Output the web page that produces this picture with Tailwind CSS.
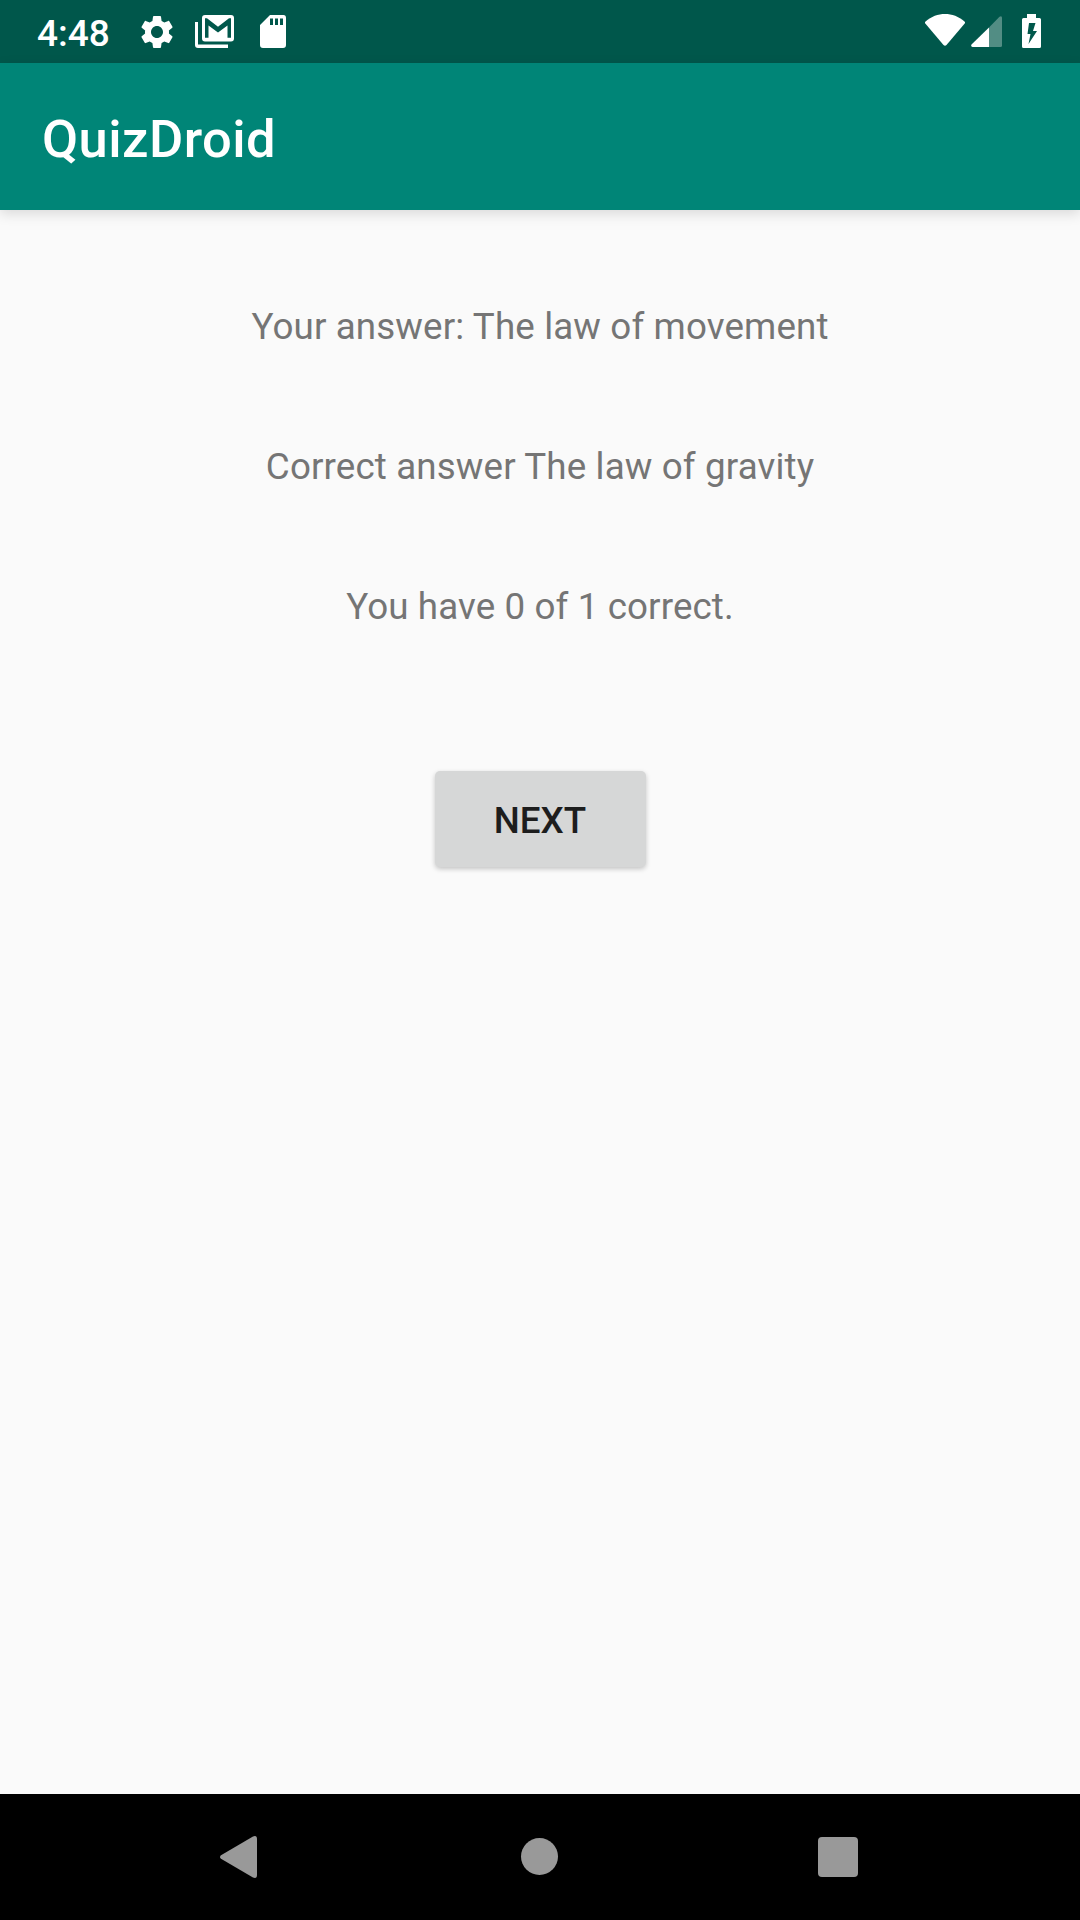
<!DOCTYPE html>
<html lang="en">
<head>
<meta charset="utf-8">
<title>QuizDroid</title>
<script src="https://cdn.jsdelivr.net/npm/@tailwindcss/browser@4"></script>
</head>
<body class="flex h-[1920px] w-[1080px] flex-col overflow-hidden bg-[#fafafa] font-['Roboto',sans-serif]">
  <!-- Status bar -->
  <header class="flex h-[63px] shrink-0 items-start bg-[#00574b] text-white">
    <span class="ml-[37px] mt-[12px] w-[100px] text-[37px] leading-[44px] font-medium">4:48</span>
    <svg class="mt-[12px] h-[40px] w-[40px]" viewBox="0 0 24 24" fill="currentColor"><path d="M19.14 12.94c.04-.3.06-.61.06-.94 0-.32-.02-.64-.07-.94l2.03-1.58c.18-.14.23-.41.12-.61l-1.92-3.32c-.12-.22-.37-.29-.59-.22l-2.39.96c-.5-.38-1.03-.7-1.62-.94l-.36-2.54c-.04-.24-.24-.41-.48-.41h-3.84c-.24 0-.43.17-.47.41l-.36 2.54c-.59.24-1.13.57-1.62.94l-2.39-.96c-.22-.08-.47 0-.59.22L2.74 8.87c-.12.21-.08.47.12.61l2.03 1.58c-.05.3-.09.63-.09.94s.02.64.07.94l-2.03 1.58c-.18.14-.23.41-.12.61l1.92 3.32c.12.22.37.29.59.22l2.39-.96c.5.38 1.03.7 1.62.94l.36 2.54c.05.24.24.41.48.41h3.84c.24 0 .44-.17.47-.41l.36-2.54c.59-.24 1.13-.56 1.62-.94l2.39.96c.22.08.47 0 .59-.22l1.92-3.32c.12-.22.07-.47-.12-.61l-2.01-1.58zM12 15.6c-1.98 0-3.6-1.62-3.6-3.6s1.62-3.6 3.6-3.6 3.6 1.62 3.6 3.6-1.62 3.6-3.6 3.6z"/></svg>
    <svg class="ml-[18px] mt-[15px] h-[33px] w-[39px]" viewBox="0 0 39 33" fill="currentColor"><path fill-rule="evenodd" d="M10 0H36Q39 0 39 3V23.500Q39 26.500 36 26.500H10Q7 26.500 7 23.500V3Q7 0 10 0ZM10 3.200V22.700H13.500V10.500L23 17.500L32.500 10.500V22.700H36V3.200H34L23 11.700L12 3.200Z"/><path d="M0 7H3V29.500H33V33H3Q0 33 0 30Z"/></svg>
    <svg class="ml-[26px] mt-[15px] h-[33px] w-[26px]" viewBox="0 0 26 33" fill="currentColor"><path fill-rule="evenodd" d="M10 0H23.500Q26 0 26 3V30Q26 33 23 33H3Q0 33 0 30V10ZM10 3.500V10H13V3.500ZM15 3.500V10H18V3.500ZM20 3.500V10H23V3.500Z"/></svg>
    <svg class="ml-auto mt-[14px] h-[32px] w-[40px]" viewBox="0 0 40 32" fill="currentColor"><path d="M.5 7.500C12-2.400 28-2.400 39.500 7.500Q40.500 8.500 39.700 9.500L21.500 31Q20 32.500 18.500 31L.3 9.500Q-.5 8.500 .5 7.500Z"/></svg>
    <svg class="ml-[6px] mt-[16px] h-[31px] w-[31px]" viewBox="0 0 31 31" fill="currentColor"><path d="M18 11.500V31H1.500Q-.5 30.500 .5 28.500Z"/><path fill-opacity=".32" d="M18 11.500L28.500 .7Q31-.8 31 2V29.500Q31 31 29.500 31H18Z"/></svg>
    <svg class="ml-[20px] mr-[39px] mt-[14px] h-[34px] w-[19px]" viewBox="0 0 19 34" fill="currentColor"><path fill-rule="evenodd" d="M5 0H14V4H17.500Q19 4 19 5.500V32.500Q19 34 17.500 34H1.500Q0 34 0 32.500V5.500Q0 4 1.500 4H5ZM7 9L5.500 20H8.500L6.500 30L15 17H11L13.500 9Z"/></svg>
  </header>
  <!-- App bar -->
  <div class="flex h-[147px] shrink-0 items-center bg-[#008577] pt-[5px] pl-[42px] shadow-[0_4px_12px_rgba(0,0,0,0.13)]">
    <h1 class="text-[52.5px] leading-[62px] font-medium tracking-[0.45px] text-white">QuizDroid</h1>
  </div>
  <!-- Quiz result -->
  <main class="flex flex-1 flex-col items-center pt-[95px] text-[36.75px] leading-[44px] text-[#757575]">
    <p class="tracking-[0.13px]">Your answer: The law of movement</p>
    <p class="mt-[96px] tracking-[0.13px]">Correct answer The law of gravity</p>
    <p class="mt-[96px] tracking-[0.11px]">You have 0 of 1 correct.</p>
    <button class="mt-[142px] h-[96px] w-[211px] rounded-[5px] bg-[#d6d7d7] pt-[4px] font-medium text-[#1d1d1d] shadow-[0_2px_5px_rgba(0,0,0,0.22)]">NEXT</button>
  </main>
  <!-- Navigation bar -->
  <nav class="flex h-[126px] shrink-0 items-center bg-black pl-[220px] text-[#999]">
    <svg class="h-[42px] w-[37px]" viewBox="0 0 37 42" fill="currentColor"><path d="M1 19.200L33 .5Q37-1 37 3V39Q37 43 33 41.500L1 22.800Q-1 21 1 19.200Z"/></svg>
    <div class="mb-px ml-[264px] size-[37px] rounded-full bg-[#999]"></div>
    <div class="ml-[260px] size-[40px] rounded-[4px] bg-[#999]"></div>
  </nav>
</body>
</html>
